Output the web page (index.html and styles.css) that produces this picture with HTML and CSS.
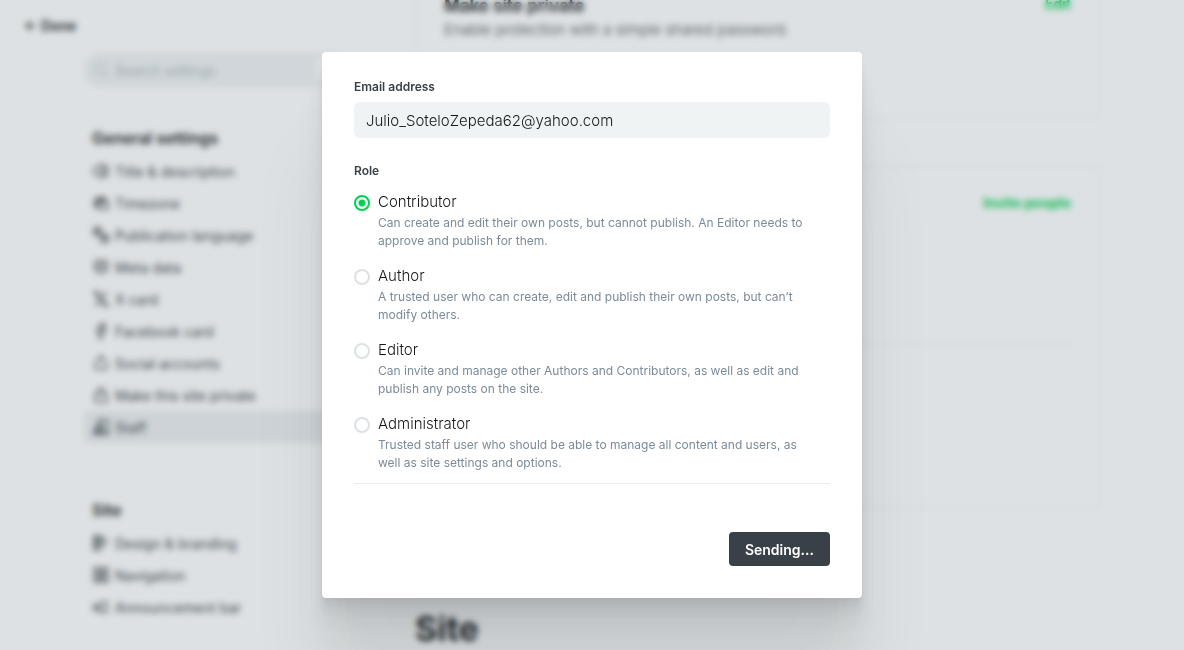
FILE: index.html
```html
<!DOCTYPE html>
<html lang="en">
<head>
<meta charset="utf-8">
<title>Settings</title>
<link rel="stylesheet" href="styles.css">
</head>
<body>
<div class="settings">
  <header class="topbar"><button class="done" type="button">← Done</button></header>
  <aside class="sidebar">
    <label class="search">
      <svg class="icon search-icon" viewBox="0 0 16 16"><circle cx="7" cy="7" r="5.5"/><path d="M11 11l4 4"/></svg>
      <input class="search-input" type="search" placeholder="Search settings" aria-label="Search settings">
      <kbd class="key">/</kbd>
    </label>
    <nav class="group">
      <h2 class="group-title">General settings</h2>
      <a class="item" href="#"><svg class="icon" viewBox="0 0 16 16"><path d="M7 4H2q-1 0-1 1v6q0 1 1 1h5"/><path d="M7 1h3M7 15h3M9 1v14M11 3h2q2 0 2 2v6q0 2-2 2h-2M11 4v8"/></svg>Title &amp; description</a>
      <a class="item" href="#"><svg class="icon" viewBox="0 0 16 16"><path d="M13 6A6 6 0 1 0 6 14M2 5h12M4 3v9M7 2v5M8 7h7v7H8zM1 9h5"/></svg>Timezone</a>
      <a class="item" href="#"><svg class="icon" viewBox="0 0 16 16"><path d="M1 1h7v7H1zM2 4h5M4 2v5M8 8h7v7H8zM10 13l2-4 2 4"/></svg>Publication language</a>
      <a class="item" href="#"><svg class="icon" viewBox="0 0 16 16"><path d="M2 2h12v9q-2 3-6 3t-6-3zM1 8h4l1 2h4l1-2h4M5 5h6"/></svg>Meta data</a>
      <a class="item" href="#"><svg class="icon" viewBox="0 0 16 16"><path d="M1 1h4l10 14h-4zM14 1L9 7M7 9L2 15"/></svg>X card</a>
      <a class="item" href="#"><svg class="icon" viewBox="0 0 16 16"><path d="M12 1H9Q6 1 6 4v2H4v3h2v6h3V9h3V6H9V4h3z"/></svg>Facebook card</a>
      <a class="item" href="#"><svg class="icon" viewBox="0 0 16 16"><path d="M4 6Q2 6 2 8v4q0 2 2 2h8q2 0 2-2V8q0-2-2-2M8 8V1M5 4l3-3 3 3"/></svg>Social accounts</a>
      <a class="item" href="#"><svg class="icon" viewBox="0 0 16 16"><path d="M2 7h12v8H2zM5 7V4q0-3 3-3t3 3v3"/></svg>Make this site private</a>
      <a class="item item-active" href="#"><svg class="icon" viewBox="0 0 16 16"><path d="M4 3l2-2h9v14H1v-3l3-4h4M5 5h4v4H5zM2 12h7M3 14h6M8 8l6 6"/></svg>Staff</a>
    </nav>
    <nav class="group">
      <h2 class="group-title">Site</h2>
      <a class="item" href="#"><svg class="icon" viewBox="0 0 16 16"><path d="M1 1h6v14H1zM1 5h11M1 9h8M7 2h4M14 4v2l-5 6M3 2v12"/></svg>Design &amp; branding</a>
      <a class="item" href="#"><svg class="icon" viewBox="0 0 16 16"><path d="M1 1h14v14H1zM4 4h8v8H4zM8 4v8M4 8h8"/></svg>Navigation</a>
      <a class="item" href="#"><svg class="icon" viewBox="0 0 16 16"><path d="M1 6h4l3-2v9l-3-2H1zM9 3h5v10H9M3 7v5"/></svg>Announcement bar</a>
    </nav>
  </aside>
  <main class="content">
    <section class="card card-cut">
      <div><h3 class="card-title">Make site private</h3><p class="card-text">Enable protection with a simple shared password.</p></div>
      <button class="link" type="button">Edit</button>
    </section>
    <section class="card card-staff">
      <button class="link" type="button">Invite people</button>
      <hr class="rule">
    </section>
    <h2 class="page-title">Site</h2>
  </main>
</div>
<div class="overlay">
  <form class="modal" role="dialog" aria-modal="true">
    <label class="label" for="email">Email address</label>
    <input class="field" id="email" type="email" value="Julio_SoteloZepeda62@yahoo.com">
    <fieldset class="roles">
      <legend class="label">Role</legend>
      <label class="role"><input class="radio" type="radio" name="role" checked><span class="role-name">Contributor</span><span class="role-text">Can create and edit their own posts, but cannot publish. An Editor needs to approve and publish for them.</span></label>
      <label class="role"><input class="radio" type="radio" name="role"><span class="role-name">Author</span><span class="role-text">A trusted user who can create, edit and publish their own posts, but can’t modify others.</span></label>
      <label class="role"><input class="radio" type="radio" name="role"><span class="role-name">Editor</span><span class="role-text">Can invite and manage other Authors and Contributors, as well as edit and publish any posts on the site.</span></label>
      <label class="role"><input class="radio" type="radio" name="role"><span class="role-name">Administrator</span><span class="role-text">Trusted staff user who should be able to manage all content and users, as well as site settings and options.</span></label>
    </fieldset>
    <footer class="actions"><button class="send" type="button">Sending...</button></footer>
  </form>
</div>
</body>
</html>
```
FILE: styles.css
```css
* { box-sizing: border-box; }
body {
  margin: 0;
  font-family: Inter, "Liberation Sans", sans-serif;
  font-size: 14px;
  color: #15171a;
  background: #fff;
  overflow: hidden;
}
h2, h3, p { margin: 0; }
button, input { font: inherit; color: inherit; border: 0; padding: 0; background: none; }

/* Settings page behind the dialog */
.settings {
  display: grid;
  grid-template-columns: 264px minmax(0, 1fr);
  grid-template-rows: auto 1fr;
  column-gap: 67px;
  height: 100vh;
  padding: 0 84px;
  overflow: hidden;
}
.topbar { grid-column: 1 / -1; grid-row: 1; margin: 16px 0 0 -60px; height: 20px; }
.done { font-weight: 600; line-height: 20px; }
.sidebar { grid-column: 1; grid-row: 2; padding-top: 17px; }
.search {
  display: flex;
  align-items: center;
  gap: 6px;
  height: 34px;
  padding: 0 10px 0 9px;
  border-radius: 17px;
  background: #eff2f3;
}
.search-input { flex: 1; min-width: 0; font-weight: 300; }
.search-input::placeholder { color: #9ba7b4; opacity: 1; }
.search .search-icon { stroke: #abb4be; stroke-width: 1; }
.key { width: 22px; height: 22px; border-radius: 4px; background: #fff; text-align: center; line-height: 22px; font-family: inherit; color: #abb4be; }
.group { margin-top: 40px; display: flex; flex-direction: column; }
.group + .group { margin-top: 56px; }
.group-title { padding: 0 8px; margin-bottom: 5px; font-size: 16px; line-height: 23px; font-weight: 600; }
.item {
  display: flex;
  align-items: center;
  gap: 6px;
  height: 32px;
  padding: 0 9px;
  border-radius: 4px;
  color: #394047;
  text-decoration: none;
}
.item-active { background: #ebeef0; }
.icon { flex: none; width: 16px; height: 16px; fill: none; stroke: #394047; stroke-width: 1.3; }
.content { grid-column: 2; grid-row: 1 / 3; margin-top: -4px; }
.card { border: 1px solid #f0f1f3; border-radius: 4px; padding: 28px; }
.card-cut { display: flex; justify-content: space-between; align-items: flex-start; min-height: 122px; padding-top: 0; border-top: 0; border-radius: 0 0 4px 4px; }
.card-title { font-size: 17px; line-height: 20px; font-weight: 600; }
.card-text { margin-top: 4px; font-size: 15px; line-height: 20px; font-weight: 300; color: #394047; }
.card-staff { display: flex; flex-direction: column; align-items: flex-end; min-height: 342px; margin-top: 48px; }
.link { color: #00d154; font-weight: 700; line-height: 16px; }
.rule { width: 100%; height: 1px; margin: 132px 0 0; border: 0; background: #f0f1f3; }
.page-title { margin-top: 98px; font-size: 34px; line-height: 46px; font-weight: 700; }

/* Dialog */
.overlay {
  position: fixed;
  inset: 0;
  display: flex;
  align-items: center;
  justify-content: center;
  background: rgba(87, 104, 117, 0.2);
  backdrop-filter: blur(3px);
}
.modal {
  width: 540px;
  max-width: 100%;
  padding: 26px 32px 32px;
  border-radius: 4px;
  background: #fff;
  box-shadow: 0 3px 2px rgba(0, 0, 0, .02), 0 7px 5px rgba(0, 0, 0, .028), 0 13px 10px rgba(0, 0, 0, .035), 0 22px 18px rgba(0, 0, 0, .042), 0 42px 33px rgba(0, 0, 0, .05), 0 100px 80px rgba(0, 0, 0, .07);
}
.label { display: block; padding: 0; font-size: 12px; line-height: 18px; font-weight: 600; color: #394047; }
.field { display: block; width: 100%; height: 36px; margin-top: 6px; padding: 0 12px; border-radius: 6px; background: #eff3f4; font-size: 15px; font-weight: 300; outline: 0; }
.roles { margin: 24px 0 0; padding: 0 0 11px; border: 0; border-bottom: 1px solid #ebeef0; display: flex; flex-direction: column; gap: 16px; }
.roles .label { margin-bottom: 12px; }
.role { display: grid; grid-template-columns: 16px 1fr; column-gap: 8px; row-gap: 2px; }
.radio { appearance: none; width: 16px; height: 16px; margin: 3px 0 0; border: 2px solid #dde1e5; border-radius: 50%; }
.radio:checked { border-color: #00d154; background: radial-gradient(circle, #00d154 3px, #fff 4px); }
.role-name { font-size: 15px; line-height: 20px; font-weight: 300; }
.role-text { grid-column: 2; padding-right: 12px; font-size: 12px; line-height: 18px; color: #7c8b9a; }
.actions { display: flex; justify-content: flex-end; margin-top: 48px; }
.send { height: 34px; padding: 0 16px; border-radius: 4px; background: #394047; color: #fff; font-weight: 600; }
```
